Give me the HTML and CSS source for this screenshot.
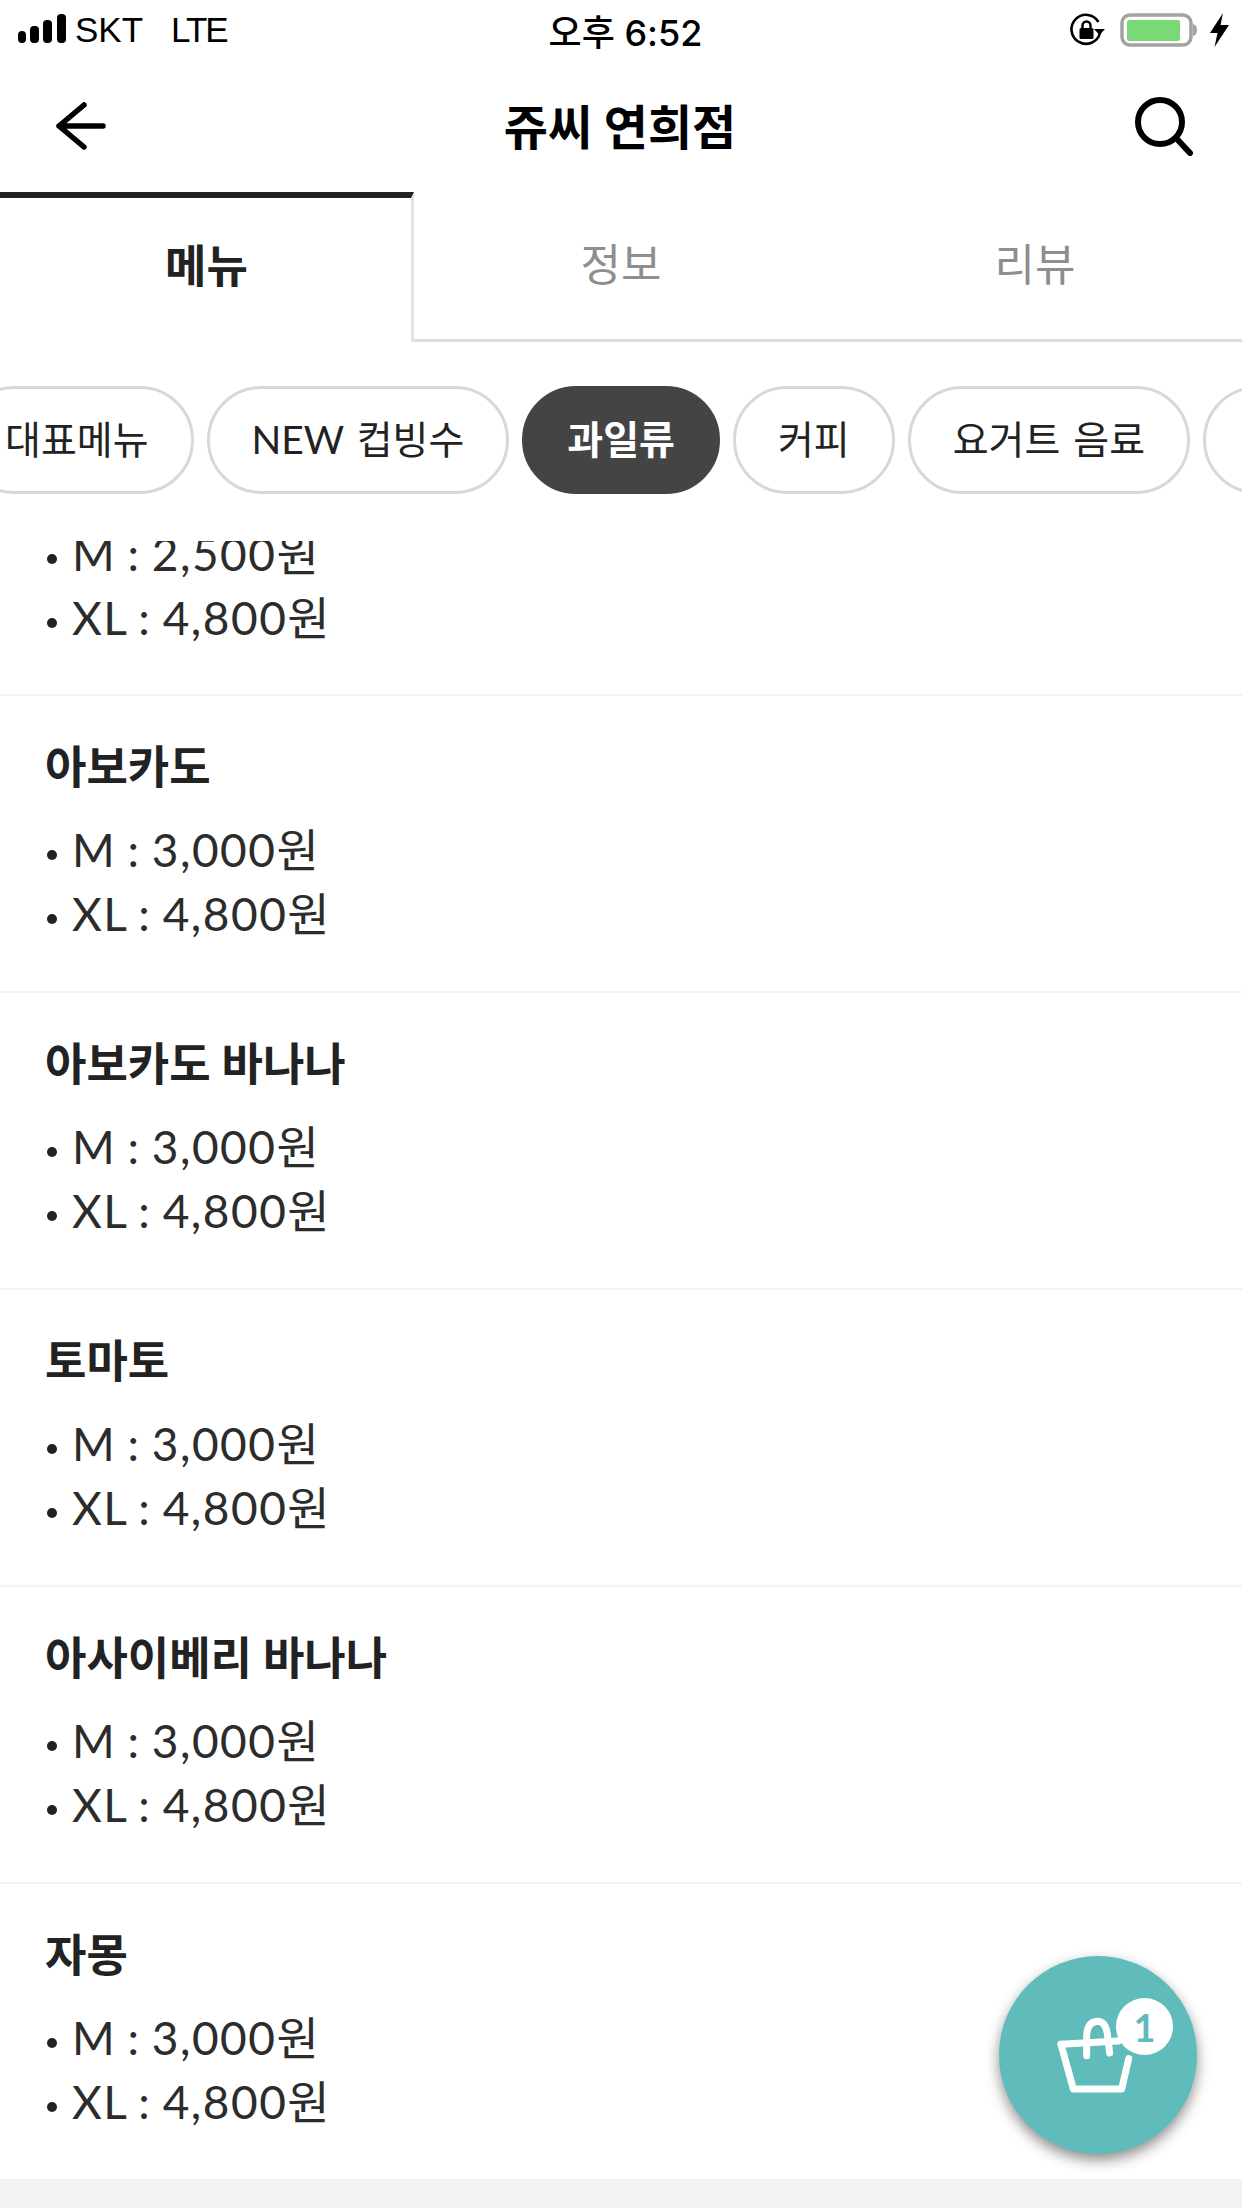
FILE: index.html
```html
<!DOCTYPE html>
<html lang="ko">
<head>
    <meta charset="UTF-8">
    <meta name="viewport" content="width=device-width, initial-scale=1.0">
    <title>쥬씨 연희점</title>
    <link rel="stylesheet" href="styles.css">
</head>
<body>

    <div class="screen">
        <!-- status bar -->
        <div class="status-bar">
            <div class="status-left">
                <svg class="signal" width="50" height="32" viewBox="0 0 50 32">
                    <rect x="0" y="17" width="8" height="12" rx="4"/>
                    <rect x="12" y="12" width="9" height="17" rx="4"/>
                    <rect x="25" y="6" width="9" height="23" rx="4"/>
                    <rect x="39" y="0" width="9" height="29" rx="4"/>
                </svg>
                <span class="carrier">SKT</span>
                <span class="carrier net">LTE</span>
            </div>
            <div class="status-time">오후 6:52</div>
            <div class="status-right">
                <svg width="36" height="36" viewBox="0 0 36 36">
                    <path d="M31 21 A14.5 14.5 0 1 1 29.5 10" fill="none" stroke="#000" stroke-width="2.6"/>
                    <path d="M25 17 h11 l-5.5 6 z"/>
                    <rect x="10.5" y="16" width="14" height="11" rx="1.5"/>
                    <path d="M13.5 17 v-3.5 a4 4 0 0 1 8 0 V17" fill="none" stroke="#000" stroke-width="2.4"/>
                </svg>
                <svg class="battery" width="78" height="34" viewBox="0 0 78 34">
                    <rect x="2" y="2" width="69" height="30" rx="8" fill="#fff" stroke="#a3a3a3" stroke-width="3.5"/>
                    <rect x="7" y="7" width="53" height="21" rx="2" fill="#78d975"/>
                    <path d="M73 11 q4 1 4 6 t-4 6 z" fill="#a3a3a3"/>
                </svg>
                <svg width="19" height="34" viewBox="0 0 19 34">
                    <path d="M13 0 L0 20 H7.5 L4.5 34 L19 12 H10.5 Z"/>
                </svg>
            </div>
        </div>

        <!-- title bar -->
        <div class="nav-bar">
            <svg class="nav-icon" width="60" height="60" viewBox="0 0 60 60">
                <path d="M8 30 H52 M33 9 L8 30 L33 51" fill="none" stroke="#000" stroke-width="5.5" stroke-linecap="round" stroke-linejoin="round"/>
            </svg>
            <h1 class="nav-title">쥬씨 연희점</h1>
            <svg class="nav-icon" width="60" height="60" viewBox="0 0 60 60">
                <circle cx="26" cy="26" r="22" fill="none" stroke="#000" stroke-width="6"/>
                <path d="M42 42 L56 57" fill="none" stroke="#000" stroke-width="6" stroke-linecap="round"/>
            </svg>
        </div>

        <div class="tabs">
            <div class="tab active">메뉴</div>
            <div class="tab">정보</div>
            <div class="tab">리뷰</div>
        </div>

        <div class="pills">
            <div class="pill">대표메뉴</div>
            <div class="pill">NEW 컵빙수</div>
            <div class="pill selected">과일류</div>
            <div class="pill">커피</div>
            <div class="pill">요거트 음료</div>
            <div class="pill pill-more"></div>
        </div>

        <div class="menu-list">
            <div class="menu-row scrolled">
                <p class="price">M : 2,500원</p>
                <p class="price">XL : 4,800원</p>
            </div>
            <div class="menu-row">
                <h3 class="menu-name">아보카도</h3>
                <p class="price">M : 3,000원</p>
                <p class="price">XL : 4,800원</p>
            </div>
            <div class="menu-row">
                <h3 class="menu-name">아보카도 바나나</h3>
                <p class="price">M : 3,000원</p>
                <p class="price">XL : 4,800원</p>
            </div>
            <div class="menu-row">
                <h3 class="menu-name">토마토</h3>
                <p class="price">M : 3,000원</p>
                <p class="price">XL : 4,800원</p>
            </div>
            <div class="menu-row">
                <h3 class="menu-name">아사이베리 바나나</h3>
                <p class="price">M : 3,000원</p>
                <p class="price">XL : 4,800원</p>
            </div>
            <div class="menu-row">
                <h3 class="menu-name">자몽</h3>
                <p class="price">M : 3,000원</p>
                <p class="price">XL : 4,800원</p>
            </div>
        </div>

        <div class="footer-strip"></div>

        <!-- floating cart button -->
        <div class="cart-button">
            <svg width="198" height="198" viewBox="117 107 594 594">
                <path d="M303 372 L475 362" fill="none" stroke="#fff" stroke-width="21" stroke-linecap="round"/>
                <path d="M303 372 L340 506 H485 L506 415" fill="none" stroke="#fff" stroke-width="21" stroke-linecap="round" stroke-linejoin="round"/>
                <path d="M380 406 V345 Q382 305 412 303 Q436 303 442 340 L449 398" fill="none" stroke="#fff" stroke-width="21" stroke-linecap="round"/>
            </svg>
            <div class="cart-count">1</div>
        </div>
    </div>

</body>
</html>
```

FILE: styles.css
```css
* {
    box-sizing: border-box;
}
html, body {
    margin: 0;
    padding: 0;
}
body {
    font-family: Lato, "Noto Sans CJK KR", sans-serif;
    color: #222;
    background-color: #fff;
}
.screen {
    position: relative;
    width: 1242px;
    height: 2208px;
    overflow: hidden;
}

/* status bar */
.status-bar {
    height: 60px;
    padding: 0 13px 0 18px;
    display: grid;
    grid-template-columns: 1fr auto 1fr;
    align-items: center;
    color: #000;
}
.status-left {
    display: flex;
    align-items: center;
}
.signal {
    margin-right: 7px;
}
.carrier {
    font-family: "Liberation Sans", sans-serif;
    font-size: 35px;
    margin-right: 28px;
}
.carrier.net {
    letter-spacing: -2px;
}
.status-time {
    font-family: Inter, "Noto Sans CJK KR", sans-serif;
    font-size: 36px;
    font-weight: 500;
    padding-left: 4px;
}
.status-right {
    display: flex;
    align-items: center;
    justify-content: flex-end;
}
.battery {
    margin: 0 12px 0 15px;
}

/* title bar */
.nav-bar {
    height: 132px;
    padding: 0 48px 0 51px;
    display: flex;
    align-items: center;
    justify-content: space-between;
}
.nav-title {
    margin: 0 5px 5px 0;
    font-size: 48px;
    font-weight: 700;
    color: #000;
}

/* tabs */
.tabs {
    height: 150px;
    display: grid;
    grid-template-columns: 414px 414px 414px;
}
.tab {
    display: flex;
    align-items: center;
    justify-content: center;
    padding-bottom: 8px;
    font-size: 44px;
    color: #8e8e8e;
    border-bottom: 3px solid #ddd;
}
.tab.active {
    padding: 0 0 14px 2px;
    font-size: 45px;
    font-weight: 700;
    color: #222;
    border-top: 6px solid #222;
    border-right: 3px solid #e2e2e2;
    border-bottom: none;
}

/* category pills */
.pills {
    display: flex;
    gap: 13px;
    margin-left: -40px;
    padding: 44px 0 47px;
}
.pill {
    flex-shrink: 0;
    height: 108px;
    padding: 0 42px 7px;
    display: flex;
    align-items: center;
    font-size: 39px;
    word-spacing: 3px;
    white-space: pre;
    border: 3px solid #d8d8d8;
    border-radius: 54px;
}
.pill.selected {
    font-weight: 700;
    color: #fff;
    background-color: #444;
    border-color: #444;
}
.pill-more {
    width: 120px;
}

/* menu list */
.menu-list {
    height: 1640px;
    overflow: hidden;
}
.menu-row {
    height: 297px;
    padding: 39px 45px 0;
    border-bottom: 2px solid #f3f3f3;
}
.menu-row.scrolled {
    height: 176px;
    padding-top: 2px;
    margin-top: -21px;
}
.menu-name {
    margin: 0 0 19px;
    font-size: 45px;
    font-weight: 700;
    line-height: 64px;
}
.price {
    margin: 0;
    font-size: 46px;
    line-height: 64px;
    letter-spacing: 1.5px;
    word-spacing: -2px;
    color: #2c2c2c;
}
.price::before {
    content: "";
    display: inline-block;
    width: 10px;
    height: 10px;
    margin: 0 15px 0 2px;
    vertical-align: middle;
    border-radius: 50%;
    background-color: #222;
}
.footer-strip {
    height: 27px;
    background-color: #f2f2f2;
}

/* floating cart */
.cart-button {
    position: absolute;
    left: 999px;
    top: 1956px;
    width: 198px;
    height: 198px;
    border-radius: 50%;
    background-color: #5fbcbb;
    box-shadow: 0 6px 14px rgba(0, 0, 0, 0.45);
}
.cart-button svg {
    display: block;
}
.cart-count {
    position: absolute;
    left: 117px;
    top: 42px;
    width: 57px;
    height: 57px;
    border-radius: 50%;
    display: flex;
    align-items: center;
    justify-content: center;
    font-size: 38px;
    font-weight: 700;
    color: #5fbcbb;
    background-color: #fff;
}
```
